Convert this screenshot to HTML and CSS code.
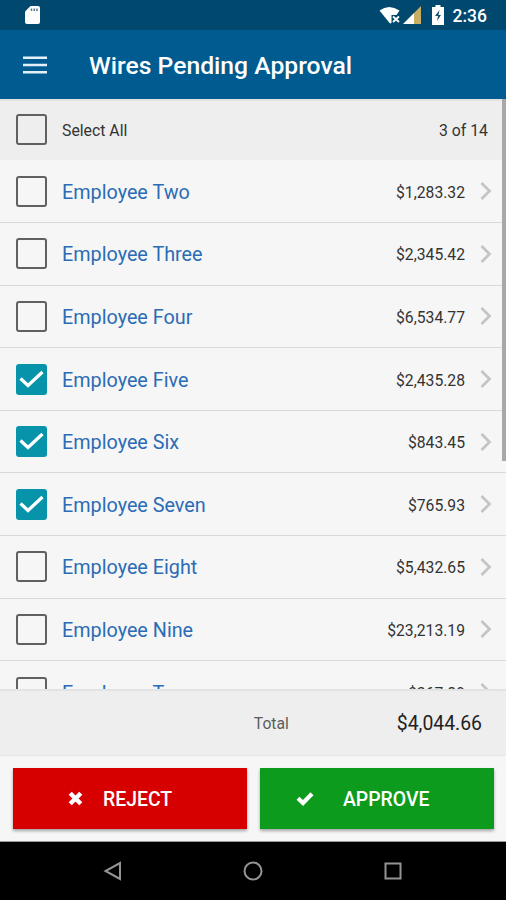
FILE: index.html
```html
<!DOCTYPE html>
<html lang="en">
<head>
<meta charset="utf-8">
<title>Wires Pending Approval</title>
<link rel="stylesheet" href="styles.css">
</head>
<body>
<svg width="0" height="0" class="defs">
  <symbol id="chev" viewBox="0 0 12 20"><path d="M1.500 2 9.500 10l-8 8" fill="none" stroke="#c4c4c4" stroke-width="2.700"/></symbol>
  <symbol id="tick" viewBox="0 0 31 31"><path d="M4.500 14.500 12 21.500 26.500 8" fill="none" stroke="#fff" stroke-width="3.200"/></symbol>
</svg>
<div class="status">
  <svg class="sd" width="17" height="20" viewBox="0 0 17 20"><path d="M6.500 1H14q2 0 2 2v14q0 2-2 2H3q-2 0-2-2V6.500z" fill="#fff"/><path d="M7.500 3.500v2.500M10.300 3.500v2.500M13 3.500v2.500" stroke="#55788f" stroke-width="1.500"/></svg>
  <svg class="wifi" width="22" height="18" viewBox="0 0 22 18"><path d="M0.500 4.500Q10 -2.500 20.500 4.500L17.500 9H12.500V17L11 17.500z" fill="#fff"/><path d="M14 10.500l6 5.500M20 10.500l-6 5.500" stroke="#fff" stroke-width="1.800"/></svg>
  <svg class="signal" width="18" height="18" viewBox="0 0 18 18"><path d="M0 18 11 7v11z" fill="#fff"/><path d="M11 7 18 0v18h-7z" fill="#c8ad64"/></svg>
  <svg class="battery" width="12" height="20" viewBox="0 0 12 20"><path d="M3.500 0h5v2H12v18H0V2h3.500z" fill="#fff"/><path d="M7.500 5 3 11h3l-1 5 4-6H6.500z" fill="#14506f"/></svg>
  <span class="clock">2:36</span>
</div>
<header class="appbar">
  <svg width="24" height="18" viewBox="0 0 24 18"><path d="M0 1.700h24M0 9h24M0 16.200h24" stroke="#e4f1fa" stroke-width="2.600"/></svg>
  <h1>Wires Pending Approval</h1>
</header>
<main class="content">
  <div class="selectall"><span class="box"></span><span class="label">Select All</span><span class="count">3 of 14</span></div>
  <ul class="list">
    <li><span class="box"></span><span class="name">Employee Two</span><span class="amt">$1,283.32</span><svg class="chev"><use href="#chev"/></svg></li>
    <li><span class="box"></span><span class="name">Employee Three</span><span class="amt">$2,345.42</span><svg class="chev"><use href="#chev"/></svg></li>
    <li><span class="box"></span><span class="name">Employee Four</span><span class="amt">$6,534.77</span><svg class="chev"><use href="#chev"/></svg></li>
    <li><svg class="box on"><use href="#tick"/></svg><span class="name">Employee Five</span><span class="amt">$2,435.28</span><svg class="chev"><use href="#chev"/></svg></li>
    <li><svg class="box on"><use href="#tick"/></svg><span class="name">Employee Six</span><span class="amt">$843.45</span><svg class="chev"><use href="#chev"/></svg></li>
    <li><svg class="box on"><use href="#tick"/></svg><span class="name">Employee Seven</span><span class="amt">$765.93</span><svg class="chev"><use href="#chev"/></svg></li>
    <li><span class="box"></span><span class="name">Employee Eight</span><span class="amt">$5,432.65</span><svg class="chev"><use href="#chev"/></svg></li>
    <li><span class="box"></span><span class="name">Employee Nine</span><span class="amt">$23,213.19</span><svg class="chev"><use href="#chev"/></svg></li>
    <li><span class="box"></span><span class="name">Employee Ten</span><span class="amt">$367.89</span><svg class="chev"><use href="#chev"/></svg></li>
  </ul>
  <div class="scrollbar"></div>
</main>
<div class="total"><span class="total-label">Total</span><span class="total-amt">$4,044.66</span></div>
<div class="actions">
  <button class="btn reject"><svg width="15" height="15" viewBox="0 0 15 15"><path d="M2.200 2.200l10.600 10.600M12.800 2.200 2.200 12.800" stroke="#fff" stroke-width="4.400"/></svg><span>REJECT</span></button>
  <button class="btn approve"><svg width="18" height="15" viewBox="0 0 18 15"><path d="M2 7.300 7 12 16 2.700" fill="none" stroke="#fff" stroke-width="4.200"/></svg><span>APPROVE</span></button>
</div>
<nav class="nav">
  <svg width="20" height="20" viewBox="0 0 20 20"><path d="M17 2v16L2.500 10z"/></svg>
  <svg width="20" height="20" viewBox="0 0 20 20"><circle cx="10" cy="10" r="8.500"/></svg>
  <svg width="20" height="20" viewBox="0 0 20 20"><rect x="2.500" y="2.500" width="15" height="15"/></svg>
</nav>
</body>
</html>
```
FILE: styles.css
```css
* { box-sizing: border-box; }
body {
  margin: 0;
  width: 506px;
  height: 900px;
  display: flex;
  flex-direction: column;
  overflow: hidden;
  background: #f6f6f6;
  font-family: Roboto, "Liberation Sans", sans-serif;
  color: #333;
}
svg { display: block; flex: none; }
.defs { position: absolute; }
.status {
  flex: none;
  height: 30px;
  padding: 0 19px 0 24px;
  display: flex;
  align-items: center;
  background: #00486e;
}
.sd { margin-right: auto; }
.wifi { margin-right: 2px; }
.signal { margin-right: 11px; }
.battery { margin-right: 9px; }
.clock { color: #fff; font-size: 17.5px; font-weight: 500; line-height: 30px; padding-top: 2px; }
.appbar {
  flex: none;
  height: 69px;
  padding: 0 23px;
  display: flex;
  align-items: center;
  background: #005b90;
}
h1 { margin: 1px 0 0 42px; color: #fff; font-size: 24.7px; font-weight: 500; white-space: nowrap; }
.content { position: relative; flex: none; height: 590px; overflow: hidden; }
.selectall, .list li {
  display: flex;
  align-items: center;
  padding: 0 14px 0 16px;
}
.selectall { height: 61px; background: #eee; padding: 0 18px 2px 16px; border-top: 2px solid #e2e2e2; }
.box {
  flex: none;
  width: 31px;
  height: 31px;
  margin-right: 15px;
  border: 2px solid #606060;
  border-radius: 3px;
}
.box.on { border: 0; background: #0794ab; }
.label { font-size: 15.8px; padding-top: 2px; }
.count { margin-left: auto; font-size: 15.8px; padding-top: 2px; }
.list { margin: 0; padding: 0.5px 0 0; list-style: none; }
.list li { height: 62.6px; border-bottom: 1px solid #d9d9d9; }
.name { color: #2b6cb5; font-size: 19.8px; padding-top: 2px; }
.amt { margin-left: auto; font-size: 15.7px; padding-top: 2px; }
.chev { width: 12px; height: 20px; margin-left: 15px; }
.scrollbar { position: absolute; top: 0; right: 0; width: 4px; height: 362px; background: #a8a8a8; }
.total {
  flex: none;
  height: 67px;
  display: flex;
  align-items: center;
  justify-content: flex-end;
  padding-right: 24px;
  background: #eee;
  border-top: 2px solid #e3e3e3;
  border-bottom: 1px solid #e6e6e6;
}
.total-label { width: 143px; font-size: 15.7px; color: #5c5c5c; }
.total-amt { font-size: 19.4px; color: #222; }
.actions {
  flex: none;
  height: 86px;
  display: flex;
  gap: 13px;
  padding: 12px 12px 12px 13px;
  border-bottom: 1px solid #999;
}
.btn {
  flex: 1 1 0;
  width: 0;
  display: flex;
  align-items: center;
  border: 0;
  padding: 0;
  color: #fff;
  font: 500 19.4px Roboto, sans-serif;
  box-shadow: 0 2px 3px #0005;
}
.btn svg:first-child { margin-left: 55px; }
.btn.approve svg:first-child { margin-left: 36px; }
.btn span { padding-top: 2px; }
.reject { background: #d70000; }
.reject span { margin-left: 20px; }
.approve { background: #0c9b1c; }
.approve span { margin-left: 29px; }
.nav {
  flex: 1;
  display: flex;
  align-items: center;
  justify-content: center;
  gap: 120px;
  background: #000;
}
.nav svg { fill: none; stroke: #949494; stroke-width: 2; }
```
